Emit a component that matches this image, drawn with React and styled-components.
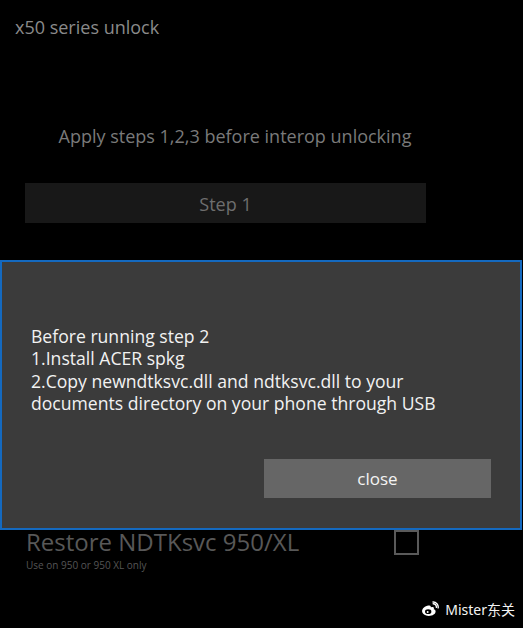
import React, { useState } from "react";
import styled, { createGlobalStyle } from "styled-components";

const GlobalStyle = createGlobalStyle`
  html, body {
    margin: 0;
    padding: 0;
    background: #000;
  }
  body {
    font-family: "Open Sans", "Noto Sans", sans-serif;
  }
`;

const Screen = styled.div`
  position: relative;
  width: 523px;
  height: 628px;
  background: #000;
  overflow: hidden;
`;

const Content = styled.div`
  display: flex;
  flex-direction: column;
`;

const Title = styled.div`
  padding: 15px 0 0 15px;
  height: 24px;
  line-height: 24px;
  font-size: 18px;
  color: #8a8a8a;
`;

const Hint = styled.div`
  margin-top: 85px;
  width: 470px;
  text-align: center;
  line-height: 24px;
  font-size: 18px;
  color: #7a7a7a;
`;

const Step = styled.div`
  margin: ${(p) => p.gap}px 0 0 25px;
  width: 401px;
  height: 40px;
  display: flex;
  align-items: center;
  justify-content: center;
  background: #181818;
  color: #6e6e6e;
  font-size: 18px;
  padding-top: 2px;
  box-sizing: border-box;
`;

const OptionRow = styled.div`
  margin-top: ${(p) => p.gap}px;
  padding-left: 26px;
  display: flex;
  align-items: flex-start;
`;

const OptionText = styled.div`
  width: 368px;
  display: flex;
  flex-direction: column;
`;

const OptionLabel = styled.div`
  font-size: 24px;
  line-height: 32px;
  color: #585858;
  white-space: nowrap;
`;

const OptionNote = styled.div`
  font-size: 10px;
  line-height: 14px;
  color: #555;
`;

const Check = styled.div`
  margin-top: 4px;
  width: 21px;
  height: 21px;
  border: 2px solid #5a5a5a;
`;

const Dialog = styled.div`
  position: absolute;
  left: 0;
  top: 260px;
  width: 518px;
  height: 266px;
  background: #3b3b3b;
  border: 2px solid #1469bf;
  display: flex;
  flex-direction: column;
`;

const Message = styled.div`
  margin: 63px 0 0 29px;
  font-size: 17.6px;
  line-height: 22.3px;
  color: #f2f2f2;
`;

const Actions = styled.div`
  margin-top: auto;
  padding: 0 29px 30px 0;
  display: flex;
  justify-content: flex-end;
`;

const CloseButton = styled.button`
  width: 227px;
  height: 39px;
  border: none;
  background: #666;
  color: #f4f4f4;
  font-family: inherit;
  font-size: 17px;
  padding: 0;
  cursor: pointer;
`;

const Watermark = styled.div`
  position: absolute;
  right: 8px;
  bottom: 9px;
  display: flex;
  align-items: center;
  gap: 6px;
  color: #f4f4f4;
  font-size: 14px;
  font-family: "Noto Sans", "Noto Sans CJK SC", sans-serif;
`;

function WeiboLogo() {
  return (
    <svg width="18" height="16" viewBox="0 0 17 15">
      <path
        d="M7 4.2C3.8 4.6 1 7 1 9.5 1 12.3 4 14 7.3 14c3.7 0 6.5-2 6.5-4.2 0-1.3-1.1-1.8-1.8-2 .5-1.1.3-2.3-1.2-2.3-.8 0-1.6.4-1.6.4.2-.9 0-2.2-2.2-1.700z"
        fill="#fff"
      />
      <ellipse cx="6.8" cy="10" rx="3" ry="2.2" fill="#000" />
      <circle cx="6.3" cy="10.3" r="0.9" fill="#fff" />
      <path d="M11.5 2.5a3 3 0 0 1 3 3.4" stroke="#fff" strokeWidth="1.3" fill="none" strokeLinecap="round" />
      <path d="M11.3.9a4.8 4.8 0 0 1 4.9 5.5" stroke="#fff" strokeWidth="1.3" fill="none" strokeLinecap="round" />
    </svg>
  );
}

export default function App() {
  const [open, setOpen] = useState(true);
  return (
    <>
      <GlobalStyle />
      <Screen>
        <Content>
          <Title>x50 series unlock</Title>
          <Hint>Apply steps 1,2,3 before interop unlocking</Hint>
          <Step gap={35}>Step 1</Step>
          <Step gap={37}>Step 2</Step>
          <Step gap={37}>Step 3</Step>
          <OptionRow gap={149}>
            <OptionText>
              <OptionLabel>Restore NDTKsvc 950/XL</OptionLabel>
              <OptionNote>Use on 950 or 950 XL only</OptionNote>
            </OptionText>
            <Check />
          </OptionRow>
        </Content>
        {open && (
          <Dialog>
            <Message>
              Before running step 2
              <br />
              1.Install ACER spkg
              <br />
              2.Copy newndtksvc.dll and ndtksvc.dll to your
              <br />
              documents directory on your phone through USB
            </Message>
            <Actions>
              <CloseButton onClick={() => setOpen(false)}>close</CloseButton>
            </Actions>
          </Dialog>
        )}
        <Watermark>
          <WeiboLogo />
          Mister东关
        </Watermark>
      </Screen>
    </>
  );
}
